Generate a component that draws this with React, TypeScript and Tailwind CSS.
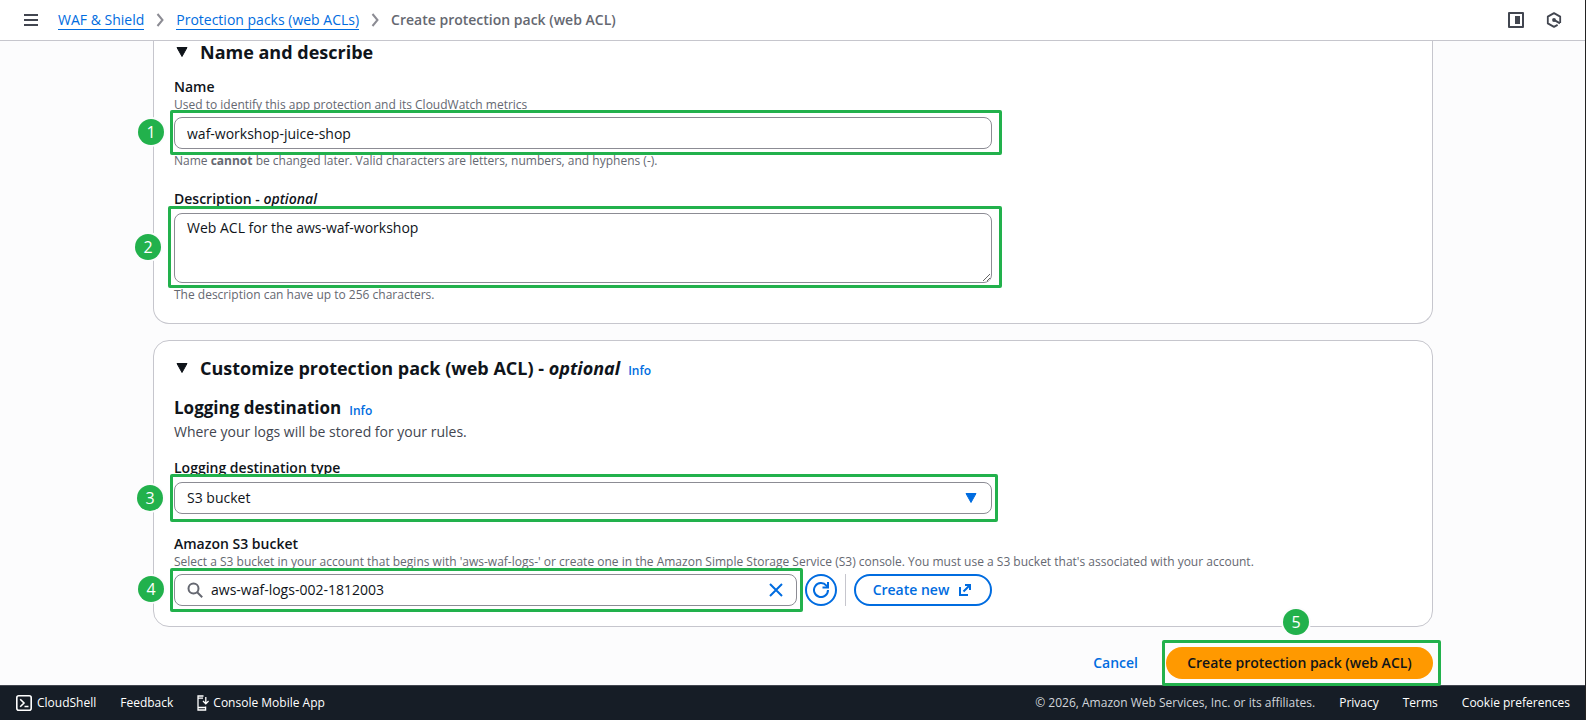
import React, { useState } from 'react';

interface CalloutProps {
  step: number;
  boxClassName: string;
  badgeClassName: string;
}

// Green highlight frame with its numbered marker
function Callout({ step, boxClassName, badgeClassName }: CalloutProps) {
  return (
    <>
      <span
        className={`pointer-events-none absolute z-10 rounded-[2px] border-3 border-[#22b14c] ${boxClassName}`}
      />
      <span
        className={`pointer-events-none absolute z-20 flex h-[26px] w-[26px] items-center justify-center rounded-full bg-[#22b14c] text-base leading-none text-white ring-2 ring-[#fcfcfd] ${badgeClassName}`}
      >
        {step}
      </span>
    </>
  );
}

function Triangle({ className }: { className: string }) {
  return (
    <svg viewBox="0 0 12 10" className={className} aria-hidden="true">
      <path d="M1 0.5h10L6 9.5z" fill="currentColor" stroke="currentColor" strokeLinejoin="round" />
    </svg>
  );
}

function ChevronRight() {
  return (
    <svg viewBox="0 0 16 16" className="h-4 w-4 text-[#8c8c94]" fill="none" stroke="currentColor" strokeWidth="2" aria-hidden="true">
      <path d="M5.5 2l5 6-5 6" />
    </svg>
  );
}

function Header() {
  return (
    <header className="flex h-[41px] shrink-0 items-center justify-between border-b border-[#c6c6cd] bg-white px-6">
      <div className="flex items-center gap-5">
        <button type="button" aria-label="Open navigation" className="text-[#424650]">
          <svg viewBox="0 0 14 12" className="block h-3 w-3.5" fill="none" stroke="currentColor" strokeWidth="2">
            <path d="M0 1h14M0 6h14M0 11h14" />
          </svg>
        </button>
        <nav aria-label="Breadcrumbs" className="flex items-center gap-2 text-sm leading-[18px]">
          <a href="#waf" className="border-b border-[#006ce0] pt-px text-[#006ce0]">WAF &amp; Shield</a>
          <ChevronRight />
          <a href="#packs" className="border-b border-[#006ce0] pt-px text-[#006ce0]">Protection packs (web ACLs)</a>
          <ChevronRight />
          <span className="font-semibold text-[#656871]">Create protection pack (web ACL)</span>
        </nav>
      </div>
      <div className="flex items-center gap-[22px] text-[#424650]">
        <button type="button" aria-label="Open side panel">
          <svg viewBox="0 0 16 16" className="block h-4 w-4">
            <rect x="1" y="1" width="14" height="14" fill="none" stroke="currentColor" strokeWidth="2" strokeLinejoin="round" />
            <rect x="7" y="4" width="5" height="8" fill="currentColor" />
          </svg>
        </button>
        <button type="button" aria-label="Open assistant">
          <svg viewBox="0 0 16 16" className="block h-4 w-4" fill="none" stroke="currentColor" strokeWidth="1.8" strokeLinejoin="round">
            <path d="M14.2 11V4.6L8 1.1 1.8 4.6v6.8L8 14.9l3.6-2" />
            <path d="M8.4 8.2l5.6 3.2" strokeWidth="2" />
            <circle cx="8" cy="8" r="1.9" fill="currentColor" stroke="none" />
          </svg>
        </button>
      </div>
    </header>
  );
}

function NameCard() {
  const [name, setName] = useState('waf-workshop-juice-shop');
  const [description, setDescription] = useState('Web ACL for the aws-waf-workshop');

  return (
    <section className="rounded-b-2xl border border-t-0 border-[#c6c6cd] bg-white px-5 pb-5">
      <h2 className="flex items-center gap-3 pl-0.5 text-lg leading-[22px] font-bold">
        <Triangle className="h-2.5 w-3" />
        Name and describe
      </h2>

      <div className="mt-3.5 max-w-[818px]">
        <label htmlFor="name" className="block text-sm leading-5 font-semibold">Name</label>
        <p className="text-xs text-[#656871]">Used to identify this app protection and its CloudWatch metrics</p>
        <div className="relative my-1">
          <input
            id="name"
            value={name}
            onChange={(e) => setName(e.target.value)}
            className="block h-8 w-full rounded-lg border border-[#8c8c94] bg-white px-3 text-sm"
          />
          <Callout step={1} boxClassName="-left-1 -right-2.5 -top-[7px] -bottom-1.5" badgeClassName="-left-9 top-0.5" />
        </div>
        <p className="text-xs text-[#656871]">
          Name <b>cannot</b> be changed later. Valid characters are letters, numbers, and hyphens (-).
        </p>
      </div>

      <div className="mt-5 max-w-[818px]">
        <label htmlFor="description" className="block text-sm leading-5 font-semibold">
          Description - <i>optional</i>
        </label>
        <div className="relative my-1">
          <textarea
            id="description"
            value={description}
            onChange={(e) => setDescription(e.target.value)}
            className="block h-[70px] w-full resize-y rounded-lg border border-[#8c8c94] bg-white px-3 py-1 text-sm"
          />
          <Callout step={2} boxClassName="-left-1.5 -right-2.5 -top-[7px] -bottom-[5px]" badgeClassName="-left-[39px] top-[21px]" />
        </div>
        <p className="text-xs text-[#656871]">The description can have up to 256 characters.</p>
      </div>
    </section>
  );
}

function CustomizeCard() {
  const [bucket, setBucket] = useState('aws-waf-logs-002-1812003');

  return (
    <section className="mt-4 rounded-2xl border border-[#c6c6cd] bg-white px-5 pt-4 pb-5">
      <div className="flex items-end gap-2">
        <h2 className="flex items-center gap-3 pl-0.5 text-lg leading-[22px] font-bold">
          <Triangle className="h-2.5 w-3" />
          <span>Customize protection pack (web ACL) - <i>optional</i></span>
        </h2>
        <a href="#customize-info" className="text-xs font-semibold text-[#006ce0]">Info</a>
      </div>

      <div className="mt-[18px] flex items-end gap-2">
        <h3 className="text-[17px] leading-[22px] font-bold">Logging destination</h3>
        <a href="#logging-info" className="text-xs font-semibold text-[#006ce0]">Info</a>
      </div>
      <p className="mt-[3px] text-sm leading-5 text-[#424650]">Where your logs will be stored for your rules.</p>

      <div className="mt-4 max-w-[818px]">
        <label htmlFor="destination" className="block text-sm leading-5 font-semibold">Logging destination type</label>
        <div className="relative mt-1">
          <select
            id="destination"
            className="block h-8 w-full appearance-none rounded-lg border border-[#8c8c94] bg-white px-3 text-sm"
          >
            <option>S3 bucket</option>
          </select>
          <Triangle className="pointer-events-none absolute top-[11px] right-[15px] h-2.5 w-3 text-[#006ce0]" />
          <Callout step={3} boxClassName="-left-1 -right-1.5 -top-2 -bottom-2" badgeClassName="-left-[37px] top-[3px]" />
        </div>
      </div>

      <div className="mt-5">
        <label htmlFor="bucket" className="block text-sm leading-5 font-semibold">Amazon S3 bucket</label>
        <p className="text-xs text-[#656871]">
          Select a S3 bucket in your account that begins with 'aws-waf-logs-' or create one in the Amazon Simple Storage
          Service (S3) console. You must use a S3 bucket that's associated with your account.
        </p>
        <div className="mt-1 flex max-w-[818px] gap-2">
          <div className="relative flex h-8 flex-1 items-center gap-2 rounded-lg border border-[#8c8c94] bg-white px-3">
            <svg viewBox="0 0 16 16" className="h-4 w-4 text-[#656871]" fill="none" stroke="currentColor" strokeWidth="2" aria-hidden="true">
              <circle cx="6.5" cy="6.5" r="5" />
              <path d="M10.2 10.2l5 5" />
            </svg>
            <input
              id="bucket"
              value={bucket}
              onChange={(e) => setBucket(e.target.value)}
              className="min-w-0 flex-1 text-sm outline-none"
            />
            <button type="button" aria-label="Clear" onClick={() => setBucket('')} className="text-[#006ce0]">
              <svg viewBox="0 0 16 16" className="block h-4 w-4" fill="none" stroke="currentColor" strokeWidth="2">
                <path d="M2 2l12 12M14 2L2 14" />
              </svg>
            </button>
            <Callout step={4} boxClassName="-left-[5px] -right-[7px] -top-[7px] -bottom-[7px]" badgeClassName="-left-[37px] top-px" />
          </div>
          <button
            type="button"
            aria-label="Refresh buckets"
            className="flex h-8 w-8 items-center justify-center rounded-full border-2 border-[#006ce0] text-[#006ce0]"
          >
            <svg viewBox="0 0 16 16" className="h-4 w-4" fill="none" stroke="currentColor" strokeWidth="2">
              <path d="M15 8a7 7 0 1 1-1.6-4.4L15 5.2" />
              <path d="M15 0v5.5H9.5" />
            </svg>
          </button>
          <span className="w-px bg-[#c6c6cd]" />
          <button
            type="button"
            className="flex h-8 w-[138px] items-center justify-center gap-2 rounded-full border-2 border-[#006ce0] text-sm font-semibold text-[#006ce0]"
          >
            Create new
            <svg viewBox="0 0 16 16" className="h-4 w-4" fill="none" stroke="currentColor" strokeWidth="2" aria-hidden="true">
              <path d="M8 3h5v5M13 3L6.5 9.5" />
              <path d="M3 5v8h8" />
            </svg>
          </button>
        </div>
      </div>
    </section>
  );
}

function Footer() {
  return (
    <footer className="mt-auto flex h-[35px] shrink-0 items-center justify-between border-t border-[#424650] bg-[#161d26] px-4 text-xs text-white">
      <div className="flex items-center gap-6">
        <button type="button" className="flex items-center gap-[5px]">
          <svg viewBox="0 0 16 16" className="h-4 w-4" fill="none" stroke="currentColor" strokeWidth="1.6" aria-hidden="true">
            <rect x="0.8" y="0.8" width="14.4" height="14.4" rx="2" />
            <path d="M4.2 4.2L8 8l-3.8 3.8M8.5 11.5h4" />
          </svg>
          CloudShell
        </button>
        <a href="#feedback">Feedback</a>
        <a href="#mobile" className="flex items-center gap-1">
          <svg viewBox="0 0 12 16" className="h-4 w-3" fill="none" stroke="currentColor" strokeWidth="1.3" aria-hidden="true">
            <path d="M6.5 1H1v14h7.6v-3.5M1 3.2h5M1 12.5h7.6" />
            <path d="M8.8 2v6.5M6 6l2.8 2.8L11.6 6" />
          </svg>
          Console Mobile App
        </a>
      </div>
      <div className="flex items-center gap-6">
        <span className="text-[#d1d5db]">© 2026, Amazon Web Services, Inc. or its affiliates.</span>
        <a href="#privacy">Privacy</a>
        <a href="#terms">Terms</a>
        <a href="#cookies">Cookie preferences</a>
      </div>
    </footer>
  );
}

export default function App() {
  return (
    <div className="flex min-h-screen flex-col bg-[#fcfcfd] font-['Open_Sans','Noto_Sans',sans-serif] text-[#0f141a]">
      <Header />
      <main className="mx-auto w-full max-w-[1280px]">
        <NameCard />
        <CustomizeCard />
        <div className="mt-5 mb-1.5 flex justify-end gap-2">
          <button type="button" className="h-8 px-5 text-sm font-semibold text-[#006ce0]">Cancel</button>
          <div className="relative">
            <button type="button" className="h-8 w-[267px] rounded-full bg-[#ff9900] text-sm font-semibold">
              Create protection pack (web ACL)
            </button>
            <Callout step={5} boxClassName="-left-1 -right-2 -top-[7px] -bottom-[7px]" badgeClassName="left-[117px] -top-[38px]" />
          </div>
        </div>
      </main>
      <Footer />
      <div className="fixed inset-y-0 right-0 z-30 w-px bg-[#232323]" />
    </div>
  );
}
